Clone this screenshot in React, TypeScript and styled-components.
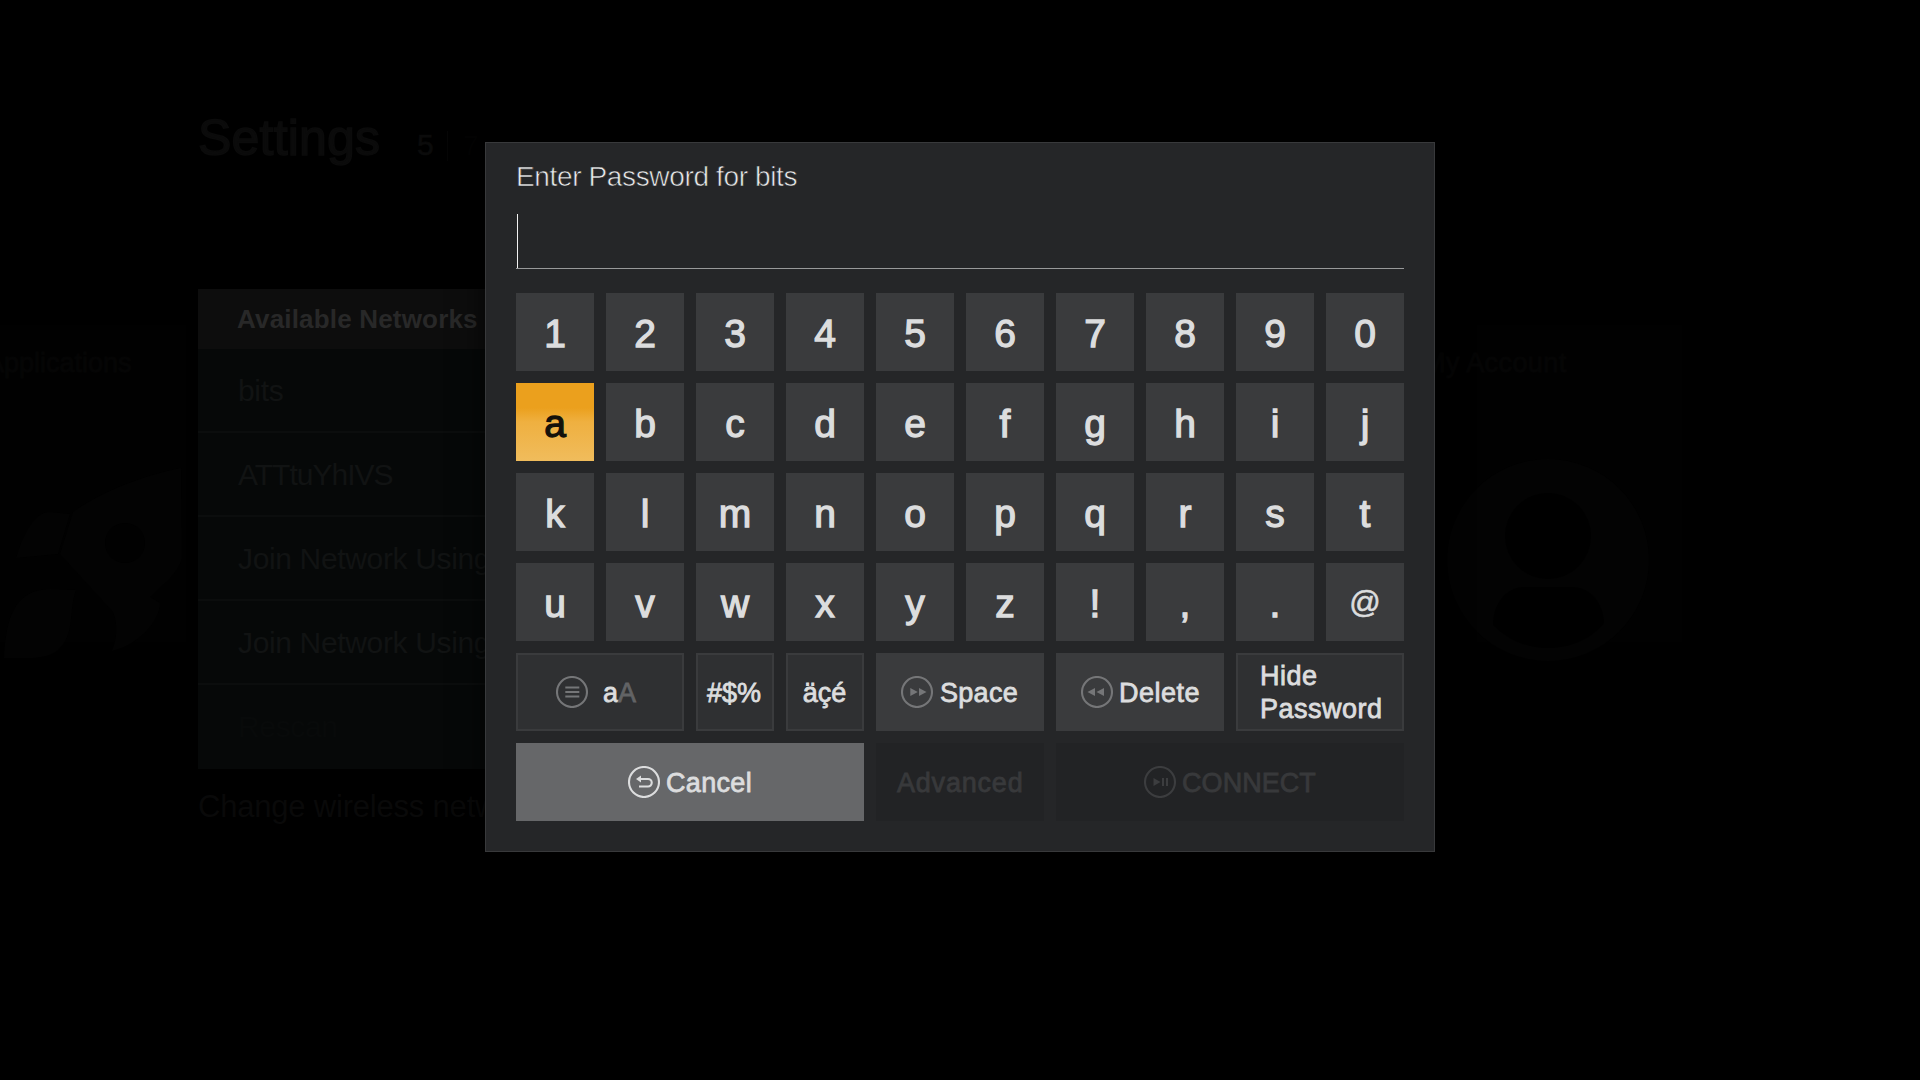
import React from "react";
import styled, { createGlobalStyle } from "styled-components";

const GlobalStyle = createGlobalStyle`
  * { box-sizing: border-box; }
  body { margin: 0; background: #000; }
`;

const Screen = styled.div`
  position: relative;
  width: 1920px;
  height: 1080px;
  overflow: hidden;
  background: #000;
  font-family: "Liberation Sans", Arial, Helvetica, sans-serif;
`;

/* ---------- dimmed launcher tiles ---------- */

const Carousel = styled.div`
  position: absolute;
  inset: 325px 0 auto -40px;
  display: flex;
  justify-content: space-between;
  padding-right: 238px;
`;

const Tile = styled.div<{ $width: number; $pad: number }>`
  width: ${(p) => p.$width}px;
  height: 317px;
  padding: 22px 0 0 ${(p) => p.$pad}px;
  background: #010101;
`;

const TileTitle = styled.div<{ $track?: number }>`
  font-size: 27px;
  line-height: 32px;
  letter-spacing: ${(p) => p.$track ?? 0}px;
  color: #050505;
  -webkit-text-stroke: 1px #050505;
  white-space: nowrap;
`;

const TileArt = styled.svg`
  display: block;
  overflow: visible;
`;

/* ---------- dimmed settings page ---------- */

const SettingsPage = styled.div`
  position: absolute;
  inset: 0 auto auto 198px;
  width: 600px;
  padding-top: 108px;
`;

const Heading = styled.div`
  display: flex;
  align-items: baseline;
  height: 181px;
  color: #0b0b0b;
`;

const PageTitle = styled.span`
  font-size: 50px;
  line-height: 60px;
  width: 219px;
  letter-spacing: 0.2px;
  -webkit-text-stroke: 1.5px #0b0b0b;
`;

const Position = styled.span`
  width: 30px;
  font-size: 30px;
  -webkit-text-stroke: 0.6px #0b0b0b;
`;

const Total = styled.span`
  padding-left: 15px;
  border-left: 1px solid #060606;
  font-size: 28px;
  line-height: 30px;
  color: #030303;
`;

const Panel = styled.div`
  background: #060808;
`;

const PanelHeader = styled.div`
  height: 60px;
  padding: 14px 0 0 39px;
  background: #0d0d0d;
  color: #282828;
  font-size: 26px;
  line-height: 32px;
  font-weight: bold;
  letter-spacing: 0.18px;
`;

const NetworkRow = styled.div<{ $faint?: boolean; $tight?: number }>`
  height: 84px;
  padding: 25px 0 0 40px;
  border-bottom: 2px solid ${(p) => (p.$faint ? "transparent" : "#0b0d0d")};
  color: ${(p) => (p.$faint ? "#080a0a" : "#111313")};
  font-size: 30px;
  line-height: 34px;
  letter-spacing: ${(p) => p.$tight ?? -0.35}px;
  white-space: nowrap;
`;

const Hint = styled.div`
  padding-top: 20px;
  color: #090909;
  font-size: 31px;
  line-height: 36px;
  letter-spacing: -0.2px;
`;

/* ---------- password dialog ---------- */

const Overlay = styled.div`
  position: absolute;
  inset: 0;
  display: flex;
  justify-content: center;
  align-items: flex-start;
  padding-top: 142px;
`;

const Dialog = styled.div`
  width: 950px;
  height: 710px;
  padding: 16px 30px 30px;
  border: 1px solid #38393b;
  background: #252628;
  box-shadow: 0 0 28px rgba(0, 0, 0, 0.7);
`;

const Prompt = styled.div`
  height: 55px;
  color: #e8e9ea;
  font-size: 28px;
  line-height: 36px;
  letter-spacing: -0.36px;
  -webkit-text-stroke: 0.6px #252628;
`;

const Field = styled.div`
  height: 55px;
  padding-left: 1px;
  border-bottom: 1px solid #98999a;
`;

const Caret = styled.div`
  width: 1px;
  height: 54px;
  background: #f2f2f2;
`;

const Keyboard = styled.div`
  display: grid;
  grid-template-columns: repeat(10, 78px);
  grid-auto-rows: 78px;
  gap: 12px;
  padding-top: 24px;
`;

type Kind = "plain" | "focused" | "outlined" | "cancel" | "disabled";

const fills: Record<Kind, string> = {
  plain: "#3a3b3d",
  focused: "linear-gradient(#eba01d 0%, #eba01d 32%, #efb040 50%, #f0bc5c 100%)",
  outlined: "#2f3032",
  cancel: "#666769",
  disabled: "#222325",
};

const inks: Record<Kind, string> = {
  plain: "#dcddde",
  focused: "#14110a",
  outlined: "#dcddde",
  cancel: "#dcddde",
  disabled: "#38393b",
};

const CharKey = styled.div<{ $kind?: Kind; $small?: boolean }>`
  display: flex;
  justify-content: center;
  padding-top: ${(p) => (p.$small ? 18 : 19)}px;
  background: ${(p) => fills[p.$kind ?? "plain"]};
  color: ${(p) => inks[p.$kind ?? "plain"]};
  font-size: ${(p) => (p.$small ? 31 : 39)}px;
  line-height: 44px;
  -webkit-text-stroke: ${(p) => (p.$small ? 0.6 : 1.3)}px currentColor;
`;

const ActionKey = styled.div<{ $kind?: Kind; $span?: number; $start?: number; $gap?: number }>`
  grid-column: span ${(p) => p.$span ?? 1};
  display: flex;
  align-items: center;
  justify-content: ${(p) => (p.$start === undefined ? "center" : "flex-start")};
  gap: ${(p) => p.$gap ?? 6}px;
  padding-left: ${(p) => p.$start ?? 0}px;
  background: ${(p) => fills[p.$kind ?? "plain"]};
  color: ${(p) => inks[p.$kind ?? "plain"]};
  box-shadow: ${(p) => (p.$kind === "outlined" ? "inset 0 0 0 2px #3a3b3d" : "none")};
  font-size: 27px;
  line-height: 33px;
`;

const Label = styled.span<{ $track?: number; $shift?: number }>`
  padding-top: 2px;
  margin-left: ${(p) => p.$shift ?? 0}px;
  letter-spacing: ${(p) => p.$track ?? 0}px;
  -webkit-text-stroke: 0.8px currentColor;
`;

const TwoLineLabel = styled(Label)`
  width: 130px;
  padding-top: 1px;
`;

const Upper = styled.span`
  color: #626365;
`;

const Glyph = styled.svg<{ $tone?: string }>`
  flex: none;
  width: 32px;
  height: 32px;
  color: ${(p) => p.$tone ?? "#757678"};
`;

function RoundIcon({ tone, children }: { tone?: string; children: React.ReactNode }) {
  return (
    <Glyph $tone={tone} viewBox="0 0 32 32">
      <circle cx="16" cy="16" r="15" fill="none" stroke="currentColor" strokeWidth="2.1" />
      {children}
    </Glyph>
  );
}

const characters = "1234567890abcdefghijklmnopqrstuvwxyz!,.@".split("");

export default function App() {
  return (
    <>
      <GlobalStyle />
      <Screen>
        <Carousel>
          <Tile $width={226} $pad={26}>
            <TileTitle>Applications</TileTitle>
            <TileArt width="180" height="200" viewBox="-14 1 180 200" fill="#030303">
              <path d="M181 90C140 98 100 115 73 134L60 176L113 234C118 246 117 260 112 273C135 268 160 245 160 225L150 219C165 205 178 195 182 180Z" />
              <circle cx="125" cy="165" r="20" fill="#010101" />
              <path d="M16 180C24 152 36 134 50 134L70 136L58 176Z" />
              <path d="M4 280C6 240 14 212 50 211L76 212C68 235 76 255 58 272C46 282 25 280 4 280Z" />
            </TileArt>
          </Tile>
          <Tile $width={300} $pad={41}>
            <TileTitle $track={0.4}>My Account</TileTitle>
            <TileArt width="205" height="205" viewBox="0 0 205 205">
              <circle cx="125" cy="181" r="101" fill="#030303" />
              <circle cx="125" cy="157" r="43" fill="#000" />
              <path d="M102 208H148C168 208 180 224 181 244C168 260 148 269 125 269C102 269 84 260 70 246C70 226 82 208 102 208Z" fill="#000" />
            </TileArt>
          </Tile>
        </Carousel>

        <SettingsPage>
          <Heading>
            <PageTitle>Settings</PageTitle>
            <Position>5</Position>
            <Total>7</Total>
          </Heading>
          <Panel>
            <PanelHeader>Available Networks</PanelHeader>
            <NetworkRow>bits</NetworkRow>
            <NetworkRow $tight={-1}>ATTtuYhIVS</NetworkRow>
            <NetworkRow>Join Network Using</NetworkRow>
            <NetworkRow>Join Network Using</NetworkRow>
            <NetworkRow $faint>Rescan</NetworkRow>
          </Panel>
          <Hint>Change wireless network</Hint>
        </SettingsPage>

        <Overlay>
          <Dialog>
            <Prompt>Enter Password for bits</Prompt>
            <Field>
              <Caret />
            </Field>
            <Keyboard>
              {characters.map((c) => (
                <CharKey key={c} $kind={c === "a" ? "focused" : "plain"} $small={c === "@"}>
                  {c}
                </CharKey>
              ))}
              <ActionKey $kind="outlined" $span={2} $start={40} $gap={15}>
                <RoundIcon>
                  <path d="M9.300 11.600h14M9.300 16.100h14M9.300 20.600h14" stroke="currentColor" strokeWidth="2" />
                </RoundIcon>
                <Label>
                  a<Upper>A</Upper>
                </Label>
              </ActionKey>
              <ActionKey $kind="outlined">
                <Label $shift={-2}>#$%</Label>
              </ActionKey>
              <ActionKey $kind="outlined">
                <Label $shift={-1}>äçé</Label>
              </ActionKey>
              <ActionKey $span={2} $start={25} $gap={7}>
                <RoundIcon>
                  <path d="M9.300 12l7.500 4-7.500 4zM18 12l7.500 4-7.500 4z" fill="currentColor" />
                </RoundIcon>
                <Label $track={0.3}>Space</Label>
              </ActionKey>
              <ActionKey $span={2} $start={25}>
                <RoundIcon>
                  <path d="M14 12l-7.500 4 7.500 4zM23 12l-7.500 4 7.500 4z" fill="currentColor" />
                </RoundIcon>
                <Label $track={0.5}>Delete</Label>
              </ActionKey>
              <ActionKey $kind="outlined" $span={2} $start={24}>
                <TwoLineLabel $track={0.5}>Hide Password</TwoLineLabel>
              </ActionKey>
              <ActionKey $kind="cancel" $span={4} $gap={6}>
                <RoundIcon tone="#dcddde">
                  <path d="M12 13h8a3.750 3.750 0 0 1 0 7.500h-9" fill="none" stroke="currentColor" strokeWidth="2.1" />
                  <path d="M8 13l5-3.500v7z" fill="currentColor" />
                </RoundIcon>
                <Label $track={0.35}>Cancel</Label>
              </ActionKey>
              <ActionKey $kind="disabled" $span={2} $start={21}>
                <Label $track={0.8}>Advanced</Label>
              </ActionKey>
              <ActionKey $kind="disabled" $span={4}>
                <RoundIcon tone="#3c3d3f">
                  <path d="M9.500 12l7 4-7 4zM18 12h2v8h-2zM22 12h2v8h-2z" fill="currentColor" />
                </RoundIcon>
                <Label $track={0.05}>CONNECT</Label>
              </ActionKey>
            </Keyboard>
          </Dialog>
        </Overlay>
      </Screen>
    </>
  );
}
